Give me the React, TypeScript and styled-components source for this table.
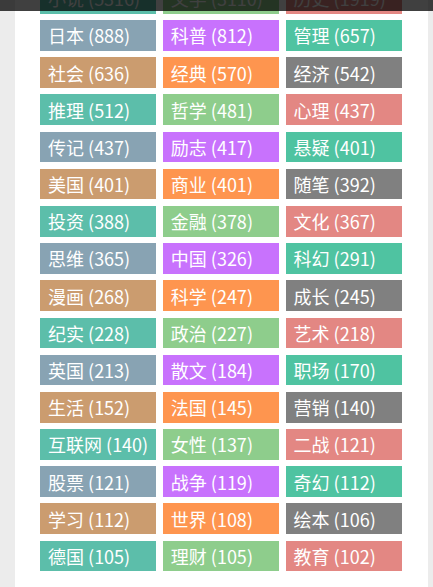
import React from "react";
import styled, { createGlobalStyle } from "styled-components";

const GlobalStyle = createGlobalStyle`
  html, body {
    margin: 0;
    padding: 0;
    background: #ececec;
    overflow: hidden;
  }
  body {
    font-family: "Noto Sans CJK SC", "Noto Sans", sans-serif;
  }
`;

const palette = [
  "#5cbeaa",
  "#8ecd8c",
  "#e38783",
  "#88a3b3",
  "#c872fd",
  "#4fc3a1",
  "#cb9c6f",
  "#fe954f",
  "#808080",
];

const tags: [string, number][] = [
  ["小说", 5316], ["文学", 3110], ["历史", 1919],
  ["日本", 888], ["科普", 812], ["管理", 657],
  ["社会", 636], ["经典", 570], ["经济", 542],
  ["推理", 512], ["哲学", 481], ["心理", 437],
  ["传记", 437], ["励志", 417], ["悬疑", 401],
  ["美国", 401], ["商业", 401], ["随笔", 392],
  ["投资", 388], ["金融", 378], ["文化", 367],
  ["思维", 365], ["中国", 326], ["科幻", 291],
  ["漫画", 268], ["科学", 247], ["成长", 245],
  ["纪实", 228], ["政治", 227], ["艺术", 218],
  ["英国", 213], ["散文", 184], ["职场", 170],
  ["生活", 152], ["法国", 145], ["营销", 140],
  ["互联网", 140], ["女性", 137], ["二战", 121],
  ["股票", 121], ["战争", 119], ["奇幻", 112],
  ["学习", 112], ["世界", 108], ["绘本", 106],
  ["德国", 105], ["理财", 105], ["教育", 102],
];

const TopShade = styled.div`
  position: fixed;
  top: 0;
  left: 0;
  right: 0;
  height: 11px;
  background: rgba(0, 0, 0, 0.75);
  z-index: 10;
`;

const Panel = styled.main`
  margin-left: 15px;
  width: 413px;
  min-height: 100vh;
  box-sizing: border-box;
  background: #ffffff;
  padding: 0 26px 30px 25px;
  overflow: hidden;
`;

const TagGrid = styled.div`
  display: grid;
  grid-template-columns: repeat(3, 1fr);
  grid-auto-rows: 30.7px;
  column-gap: 6.3px;
  row-gap: 6.5px;
  margin-top: -17.2px;
`;

const Tag = styled.a<{ $bg: string }>`
  display: flex;
  align-items: center;
  padding: 0 0 0 8px;
  background: ${(p) => p.$bg};
  color: #ffffff;
  font-size: 18px;
  line-height: 1;
  text-decoration: none;
  white-space: nowrap;
  overflow: hidden;
`;

export default function App() {
  return (
    <>
      <GlobalStyle />
      <TopShade />
      <Panel>
        <TagGrid>
          {tags.map(([name, count], i) => (
            <Tag key={name} href="#" $bg={palette[i % palette.length]}>
              {name} ({count})
            </Tag>
          ))}
        </TagGrid>
      </Panel>
    </>
  );
}
